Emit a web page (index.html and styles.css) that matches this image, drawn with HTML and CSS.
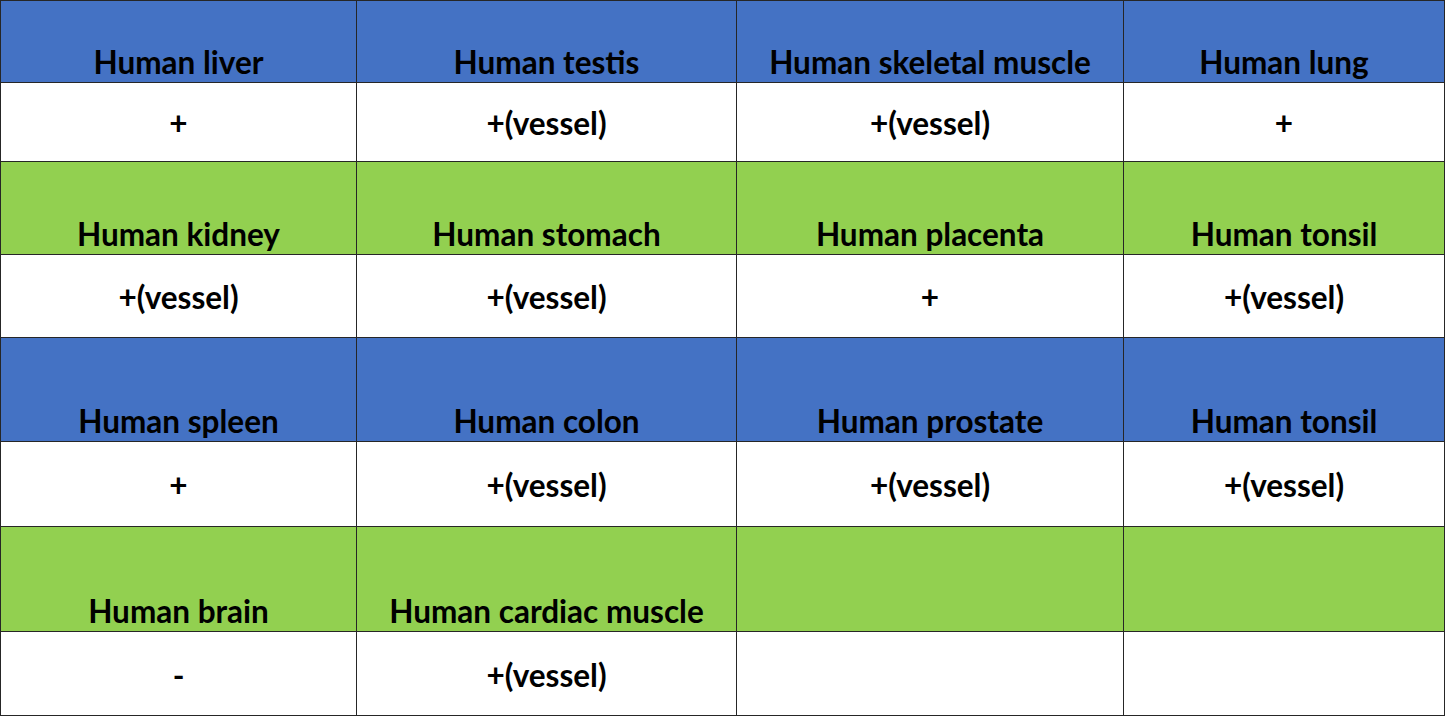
FILE: index.html
```html
<!DOCTYPE html>
<html lang="en">
<head>
<meta charset="utf-8">
<title>Human tissue table</title>
<link rel="stylesheet" href="styles.css">
</head>
<body>
<table class="grid">
  <colgroup>
    <col class="c1"><col class="c2"><col class="c3"><col class="c4">
  </colgroup>
  <tr class="head blue r1">
    <td>Human liver</td><td>Human testis</td><td>Human skeletal muscle</td><td>Human lung</td>
  </tr>
  <tr class="val r2">
    <td>+</td><td>+(vessel)</td><td>+(vessel)</td><td>+</td>
  </tr>
  <tr class="head green r3">
    <td>Human kidney</td><td>Human stomach</td><td>Human placenta</td><td>Human tonsil</td>
  </tr>
  <tr class="val r4">
    <td>+(vessel)</td><td>+(vessel)</td><td>+</td><td>+(vessel)</td>
  </tr>
  <tr class="head blue r5">
    <td>Human spleen</td><td>Human colon</td><td>Human prostate</td><td>Human tonsil</td>
  </tr>
  <tr class="val r6">
    <td>+</td><td>+(vessel)</td><td>+(vessel)</td><td>+(vessel)</td>
  </tr>
  <tr class="head green r7">
    <td>Human brain</td><td>Human cardiac muscle</td><td></td><td></td>
  </tr>
  <tr class="val r8">
    <td>-</td><td>+(vessel)</td><td></td><td></td>
  </tr>
</table>
</body>
</html>
```

FILE: styles.css
```css
html, body {
  margin: 0;
  padding: 0;
  background: #ffffff;
}

.grid {
  border-collapse: collapse;
  table-layout: fixed;
  width: 1444px;
  font-family: Lato, "Open Sans", sans-serif;
  font-weight: 700;
  font-size: 31.5px;
  color: #000;
}

.c1 { width: 356px; }
.c2 { width: 380px; }
.c3 { width: 387px; }
.c4 { width: 321px; }

.grid td {
  border: 1px solid #262626;
  text-align: center;
  padding: 0;
  line-height: 1;
}

.head td {
  vertical-align: bottom;
  padding-bottom: 4px;
}

.val td {
  vertical-align: middle;
  padding-top: 4px;
}

.blue td { background: #4472c4; }
.green td { background: #92d050; }
.val td { background: #ffffff; }

.r1 { height: 82px; }
.r2 { height: 79px; }
.r3 { height: 93px; }
.r4 { height: 83px; }
.r5 { height: 104px; }
.r6 { height: 85px; }
.r7 { height: 105px; }
.r8 { height: 84px; }
```
